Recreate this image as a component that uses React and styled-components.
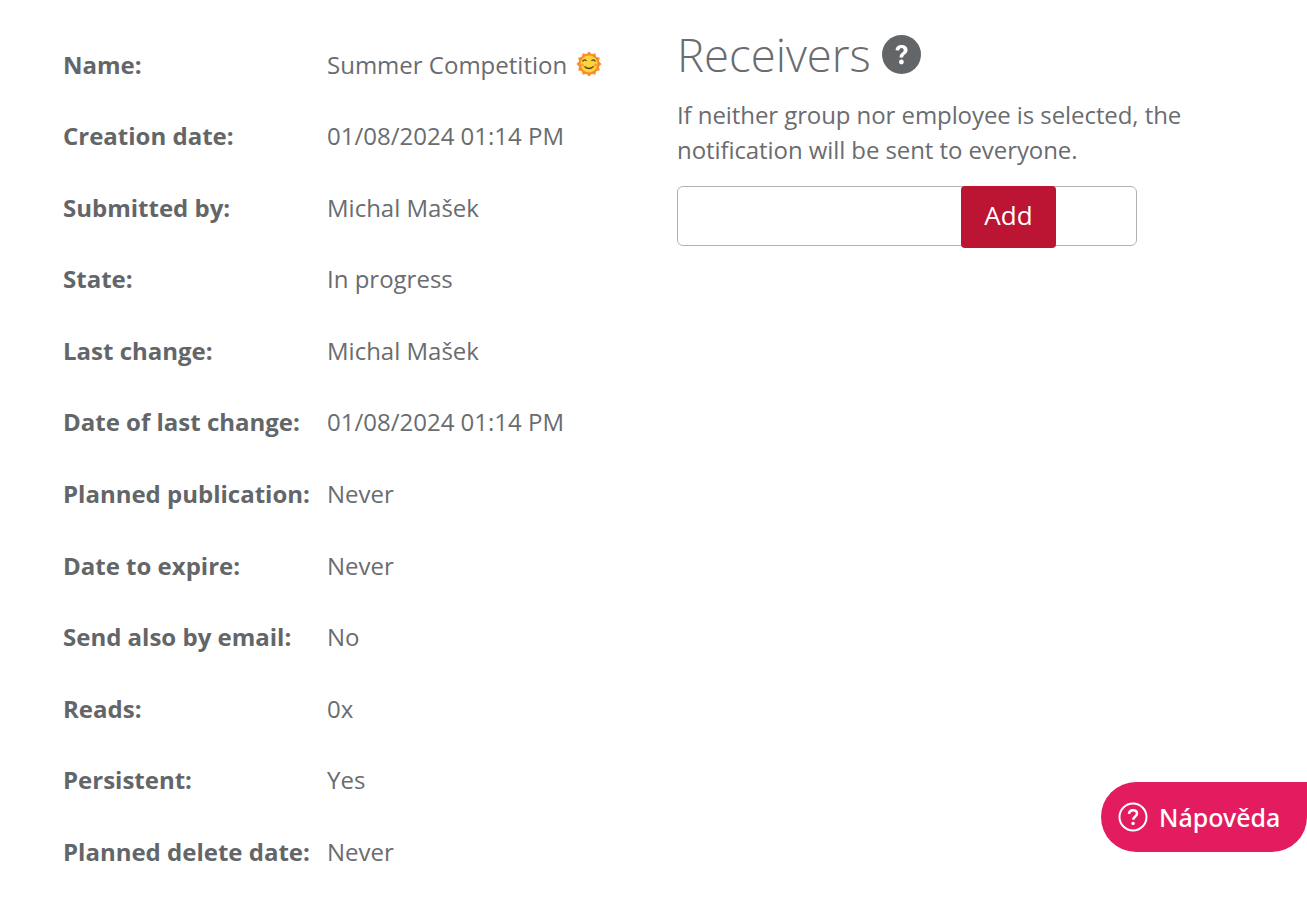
import React from "react";
import styled, { createGlobalStyle } from "styled-components";

const Global = createGlobalStyle`
  html, body { margin: 0; padding: 0; background: #fff; }
  body { font-family: "Open Sans", "Liberation Sans", sans-serif; color: #636669; overflow: hidden; }
`;
const Page = styled.div`
  width: 1307px; height: 906px; position: relative; overflow: hidden;
  display: flex; padding: 28.43px 0 0 63px; box-sizing: border-box;
`;
const Details = styled.dl`
  width: 614px; margin: 0; display: grid;
  grid-template-columns: 264px 1fr; grid-auto-rows: 71.55px; align-items: center;
  font-size: 24px; flex: none;
`;
const Label = styled.dt`font-weight: 700;`;
const Value = styled.dd`margin: 0; display: flex; align-items: center; gap: 9px; color: #6a6c6f;`;
const Receivers = styled.section`width: 510px; display: flex; flex-direction: column;`;
const Heading = styled.div`display: flex; align-items: center; gap: 11px; margin-top: -4.43px;`;
const Title = styled.h2`margin: 0; font-weight: 300; font-size: 45.5px; line-height: 60px; color: #6a6c6f;`;
const Hint = styled.p`margin: 12.5px 0 0; font-size: 24px; line-height: 35px; width: 520px; color: #6a6c6f; letter-spacing: -0.08px;`;
const Field = styled.div`
  margin-top: 19.5px; width: 460px; height: 60px; box-sizing: border-box;
  border: 1px solid #b3b3b3; border-radius: 6px; padding-left: 283px;
`;
const AddButton = styled.button`
  display: block; width: 95px; height: 62px; margin-top: -1px; padding: 0 0 5px; border: 0; border-radius: 4px;
  background: #bc1533; color: #fff; font: 400 26px "Open Sans", sans-serif;
`;
const HelpButton = styled.button`
  position: absolute; left: 1101px; top: 782px; width: 206px; height: 70px; box-sizing: border-box;
  display: flex; align-items: center; gap: 11px; padding: 0 0 0 17px; border: 0;
  background: #e31c5f; color: #fff; border-radius: 35px 0 35px 35px;
  font: 500 25px "Noto Sans", "Open Sans", sans-serif;
`;

const rows = [
  ["Name:", "Summer Competition"],
  ["Creation date:", "01/08/2024 01:14 PM"],
  ["Submitted by:", "Michal Mašek"],
  ["State:", "In progress"],
  ["Last change:", "Michal Mašek"],
  ["Date of last change:", "01/08/2024 01:14 PM"],
  ["Planned publication:", "Never"],
  ["Date to expire:", "Never"],
  ["Send also by email:", "No"],
  ["Reads:", "0x"],
  ["Persistent:", "Yes"],
  ["Planned delete date:", "Never"],
];

const rayAngles = Array.from({ length: 12 }, (_, i) => i * 30);
const SunEmoji = () => (
  <svg width="26" height="26" viewBox="0 0 26 26" aria-hidden="true">
    {rayAngles.map((a) => (
      <rect key={a} x="10.5" y="1.5" width="5" height="5" fill="#f78d2e" transform={`rotate(${a} 13 13) rotate(45 13 4)`} />
    ))}
    <circle cx="13" cy="13" r="9.6" fill="#f78d2e" />
    <circle cx="13" cy="13" r="8.4" fill="#fdd53a" />
    <path d="M6.5 10.5 Q8.5 7.5 10.5 10 M15.5 10 Q17.5 7.5 19.5 10.5" fill="none" stroke="#5b4322" strokeWidth="1.2" />
    <path d="M8.5 15.5 Q13 19.5 17.5 15.5" fill="none" stroke="#5b4322" strokeWidth="1.3" />
    <circle cx="6.5" cy="14" r="1.6" fill="#f9a13a" />
    <circle cx="19.5" cy="14" r="1.6" fill="#f9a13a" />
  </svg>
);

const QuestionBadge = () => (
  <svg width="39" height="39" viewBox="0 0 39 39" aria-hidden="true">
    <circle cx="19.5" cy="19.5" r="19.5" fill="#636669" />
    <path d="M13.6 15.2 C13.8 11.8 16.2 10 19.6 10 C23 10 25.6 11.9 25.6 15 C25.6 19 21.1 19.2 21.1 22.6 H17.6 C17.6 17.6 21.7 17.8 21.7 15.2 C21.7 13.8 20.7 13.1 19.5 13.1 C18.2 13.1 17.3 14 17.2 15.6 Z" fill="#fff" />
    <circle cx="19.4" cy="27" r="2.4" fill="#fff" />
  </svg>
);

const HelpIcon = () => (
  <svg width="30" height="30" viewBox="0 0 30 30" fill="none" aria-hidden="true">
    <circle cx="15" cy="15" r="13.5" stroke="#fff" strokeWidth="2" />
    <path d="M10.9 11.8 C11.2 9.4 12.9 8.2 15 8.2 C17.3 8.2 19 9.6 19 11.6 C19 14.4 15.4 14.6 15.2 17.6" stroke="#fff" strokeWidth="2.5" />
    <circle cx="15.1" cy="21.4" r="1.7" fill="#fff" />
  </svg>
);

export default function App() {
  return (
    <>
      <Global />
      <Page>
        <Details>
          {rows.map(([label, value], i) => (
            <React.Fragment key={label}>
              <Label>{label}</Label>
              <Value>{value}{i === 0 && <SunEmoji />}</Value>
            </React.Fragment>
          ))}
        </Details>
        <Receivers>
          <Heading>
            <Title>Receivers</Title>
            <QuestionBadge />
          </Heading>
          <Hint>If neither group nor employee is selected, the notification will be sent to everyone.</Hint>
          <Field><AddButton>Add</AddButton></Field>
        </Receivers>
        <HelpButton><HelpIcon />Nápověda</HelpButton>
      </Page>
    </>
  );
}
